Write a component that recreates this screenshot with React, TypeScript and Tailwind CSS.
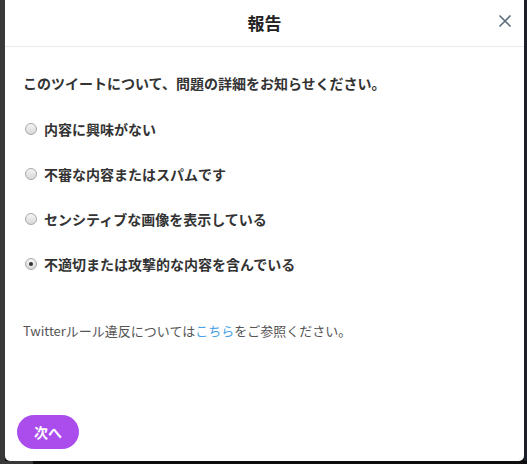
import React from "react";

const options = [
  { label: "内容に興味がない", checked: false },
  { label: "不審な内容またはスパムです", checked: false },
  { label: "センシティブな画像を表示している", checked: false },
  { label: "不適切または攻撃的な内容を含んでいる", checked: true },
];

function Radio({ checked }: { checked: boolean }) {
  return (
    <span className="flex h-[12px] w-[12px] items-center justify-center rounded-full border border-[#a8a8a8] bg-gradient-to-b from-[#f4f4f4] to-[#d8d8d8]">
      {checked && <span className="h-[4px] w-[4px] rounded-full bg-[#333]" />}
    </span>
  );
}

export default function App() {
  return (
    <div
      className="flex h-[464px] w-[527px] flex-col bg-[#0d0d0d]"
      style={{ fontFamily: '"Noto Sans CJK JP", "Noto Sans", sans-serif' }}
    >
      <div className="flex h-[461px] w-full">
        <div className="w-[5px] bg-[#383838]" />
        <div className="flex w-[519px] flex-col rounded-b-[5px] bg-white">
          <div className="relative flex h-[47px] items-center justify-center border-b border-[#e8ebed]">
            <span className="text-[17px] font-bold text-[#222]">報告</span>
            <svg
              className="absolute right-[12px] top-[14px]"
              width="14"
              height="14"
              viewBox="0 0 14 14"
            >
              <path d="M1.5 1.5 L12.5 12.5 M12.5 1.5 L1.5 12.5" stroke="#5c6e7d" strokeWidth="1.6" fill="none" />
            </svg>
          </div>
          <div className="flex flex-1 flex-col px-[18px]">
            <p className="mt-[26px] text-[14px] font-bold leading-[20px] text-[#333]">
              このツイートについて、問題の詳細をお知らせください。
            </p>
            <div className="mt-[26px] flex flex-col gap-[25px]">
              {options.map((o) => (
                <div key={o.label} className="flex h-[20px] items-center gap-[7px] pl-[2px]">
                  <Radio checked={o.checked} />
                  <span className="text-[14px] font-bold leading-[20px] text-[#333]">{o.label}</span>
                </div>
              ))}
            </div>
            <p className="mt-[47px] text-[13px] leading-[20px] text-[#555]">
              Twitterルール違反については<span className="text-[#4aa1e8]">こちら</span>をご参照ください。
            </p>
            <div className="mt-auto mb-[12px]">
              <button className="h-[34px] w-[62px] -ml-[6px] rounded-full bg-[#ab4ded] text-[14px] font-bold text-white">
                次へ
              </button>
            </div>
          </div>
        </div>
        <div className="w-[3px] bg-[#1b1f2a]" />
      </div>
      <div className="flex h-[3px]">
        <div className="w-[33px] bg-[#383838]" />
      </div>
    </div>
  );
}
